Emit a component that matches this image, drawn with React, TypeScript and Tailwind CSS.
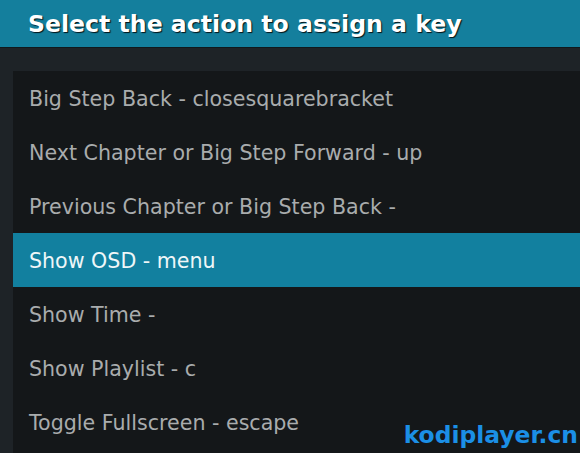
const actions = [
  "Big Step Back - closesquarebracket",
  "Next Chapter or Big Step Forward - up",
  "Previous Chapter or Big Step Back -",
  "Show OSD - menu",
  "Show Time -",
  "Show Playlist - c",
  "Toggle Fullscreen - escape",
];

const selected = 3;

export default function App() {
  return (
    <div className="relative flex h-[453px] w-[580px] flex-col overflow-hidden bg-[#1e2327] font-['DejaVu_Sans',sans-serif]">
      <header className="flex h-[48px] shrink-0 items-center border-b border-[#10181c] bg-[#147f9d] pt-[3px] pl-[28px]">
        <h1 className="text-[23.6px] font-bold text-white [text-shadow:1px_1px_1px_rgba(0,0,0,0.85)]">
          Select the action to assign a key
        </h1>
      </header>
      <div className="mt-[23px] ml-[13px] flex-1 bg-[#141719]">
        <ul>
          {actions.map((a, i) => (
            <li
              key={a}
              className={
                i === selected
                  ? "flex h-[54px] items-center bg-[#12809f] pt-[3px] pl-[16px] text-[20.6px] text-[#eef6f8]"
                  : "flex h-[54px] items-center pt-[3px] pl-[16px] text-[20.6px] text-[#a9acad]"
              }
            >
              {a}
            </li>
          ))}
        </ul>
      </div>
      <div className="absolute right-[2px] bottom-0 text-[23.4px] font-bold text-[#1b8fe6]">
        kodiplayer.cn
      </div>
    </div>
  );
}
